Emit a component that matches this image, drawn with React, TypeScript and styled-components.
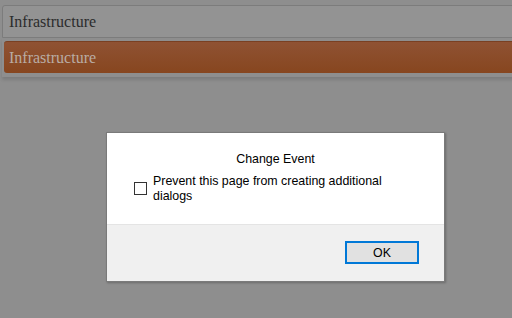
import React from 'react';
import styled, { createGlobalStyle } from 'styled-components';

const GlobalStyle = createGlobalStyle`
  html, body {
    margin: 0;
    padding: 0;
    width: 512px;
    height: 318px;
    overflow: hidden;
    background: #8e8e8e;
  }
  #root {
    position: relative;
    width: 512px;
    height: 318px;
  }
`;

const Page = styled.div`
  display: flex;
  flex-direction: column;
  padding: 5px 0 0 2px;
  font-family: 'Liberation Serif', 'Times New Roman', serif;
`;

const ListHeader = styled.div`
  display: flex;
  align-items: center;
  height: 31px;
  padding-left: 6px;
  margin-right: -10px;
  background: #939393;
  border: 1px solid #7c7c7c;
  border-radius: 3px 0 0 0;
  color: #2c2c2c;
  font-size: 16px;
`;

const ListBody = styled.div`
  padding: 3px 0 4px 2px;
  margin-right: -10px;
  box-shadow: 0 3px 3px rgba(0, 0, 0, 0.12);
`;

const ActiveItem = styled.div`
  display: flex;
  align-items: center;
  height: 31px;
  padding-left: 5px;
  background: linear-gradient(#8f5233, #87461f);
  border-top: 1px solid #7a4022;
  border-radius: 3px 0 0 3px;
  color: #b9aca4;
  font-size: 16px;
`;

const Overlay = styled.div`
  position: absolute;
  inset: 0;
  display: flex;
  align-items: flex-start;
  padding: 132px 0 0 106px;
`;

const Dialog = styled.div`
  display: flex;
  flex-direction: column;
  width: 337px;
  border: 1px solid #7a7a7a;
  box-shadow: 1px 1px 2px rgba(0, 0, 0, 0.25);
  font-family: 'Liberation Sans', Arial, sans-serif;
  font-size: 12.4px;
  color: #000;
`;

const DialogBody = styled.div`
  display: flex;
  flex-direction: column;
  height: 92px;
  padding: 19px 27px 0 27px;
  box-sizing: border-box;
  background: #fff;
  border-bottom: 1px solid #e4e4e4;
`;

const Title = styled.div`
  text-align: center;
  line-height: 15px;
`;

const CheckRow = styled.label`
  display: flex;
  align-items: center;
  gap: 6px;
  margin-top: 7px;
`;

const Box = styled.span`
  flex: none;
  width: 11px;
  height: 11px;
  border: 1px solid #333;
  background: #fff;
  margin-top: -2px;
`;

const CheckText = styled.span`
  line-height: 15px;
  max-width: 245px;
`;

const Footer = styled.div`
  display: flex;
  justify-content: flex-end;
  align-items: flex-start;
  height: 56px;
  padding: 16px 25px 0 0;
  box-sizing: border-box;
  background: #f0f0f0;
`;

const OkButton = styled.button`
  width: 74px;
  height: 23px;
  border: 2px solid #0078d7;
  background: #e1e1e1;
  font-family: 'Liberation Sans', Arial, sans-serif;
  font-size: 12.4px;
  color: #000;
  padding: 0;
`;

export default function App() {
  return (
    <>
      <GlobalStyle />
      <Page>
        <ListHeader>Infrastructure</ListHeader>
        <ListBody>
          <ActiveItem>Infrastructure</ActiveItem>
        </ListBody>
      </Page>
      <Overlay>
        <Dialog>
          <DialogBody>
            <Title>Change Event</Title>
            <CheckRow>
              <Box />
              <CheckText>Prevent this page from creating additional dialogs</CheckText>
            </CheckRow>
          </DialogBody>
          <Footer>
            <OkButton>OK</OkButton>
          </Footer>
        </Dialog>
      </Overlay>
    </>
  );
}
